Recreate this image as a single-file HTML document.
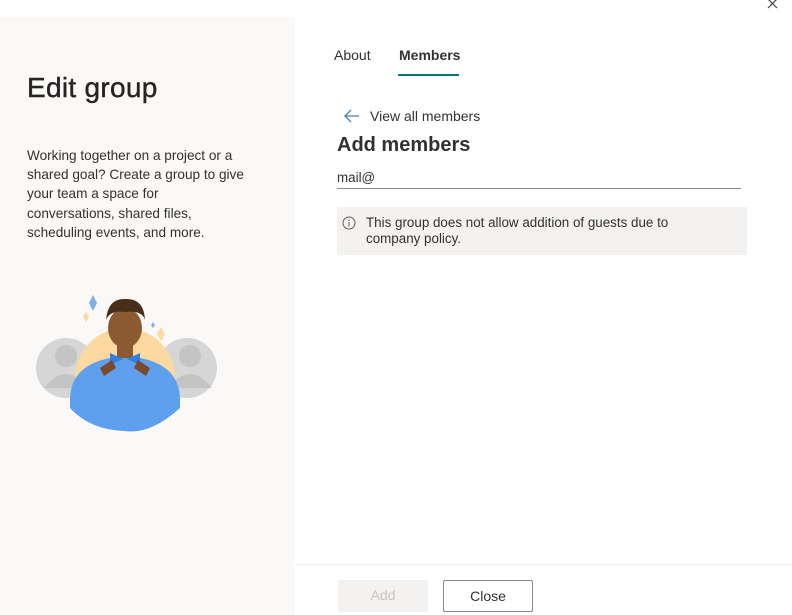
<!DOCTYPE html>
<html><head><meta charset="utf-8"><style>
*{margin:0;padding:0;box-sizing:border-box}
body{width:792px;height:615px;background:#fff;font-family:"Liberation Sans",sans-serif;color:#323130;position:relative;overflow:hidden}
.left{position:absolute;left:0;top:17px;width:295px;height:598px;background:#faf9f8}
.abs{position:absolute}
h1{position:absolute;left:27px;top:72px;font-size:28px;font-weight:normal;color:#252423;letter-spacing:0.3px;-webkit-text-stroke:0.4px #252423}
.desc{left:27px;top:146px;width:222px;font-size:13.6px;line-height:19.2px;color:#323130}
.tab{top:47px;font-size:14px}
.ul{left:398px;top:74px;width:61px;height:2px;background:#03787c}
.info{left:337px;top:207px;width:410px;height:48px;background:#f3f2f1}
.btn{top:580px;width:90px;height:32px;font-size:14px;text-align:center;line-height:30px;border-radius:2px}
</style></head><body>
<div class="left"></div>
<svg class="abs" style="left:766px;top:-3px" width="14" height="14" viewBox="0 0 14 14"><path d="M2 2L11 11M11 2L2 11" stroke="#444" stroke-width="1.2"/></svg>
<h1>Edit group</h1>
<div class="abs desc">Working together on a project or a shared goal? Create a group to give your team a space for conversations, shared files, scheduling events, and more.</div>
<svg class="abs" style="left:30px;top:290px" width="195" height="145" viewBox="0 0 195 145">
<circle cx="36" cy="78" r="30" fill="#d6d6d6"/>
<circle cx="36" cy="66" r="11" fill="#c4c4c4"/><path d="M14 98 Q36 70 58 98 Z" fill="#c4c4c4"/>
<circle cx="157" cy="78" r="30" fill="#d6d6d6"/>
<circle cx="160" cy="66" r="11" fill="#c4c4c4"/><path d="M138 98 Q160 70 182 98 Z" fill="#c4c4c4"/>
<circle cx="95" cy="88" r="50" fill="#fbd9a0"/>
<path d="M63 5 L67 13 L63 21 L59 13Z" fill="#7fb0ea"/>
<path d="M56 22 L59 27 L56 32 L53 27Z" fill="#fbd9a0"/>
<path d="M131 37 L135 44 L131 51 L127 44Z" fill="#fbd9a0"/>
<path d="M123 32 L125 35 L123 38 L121 35Z" fill="#7fb0ea"/>
<path d="M40 110 Q40 70 95 66 Q150 70 150 110 L150 118 Q120 145 95 141 Q60 140 40 118Z" fill="#5ea0ee"/>
<rect x="87" y="48" width="16" height="20" fill="#8b5a33"/>
<ellipse cx="95" cy="38" rx="17" ry="20" fill="#8b5a33"/>
<path d="M76 30 Q78 8 95 9 Q114 8 115 30 Q112 20 95 22 Q80 20 76 30Z" fill="#4a2e1c"/>
<path d="M80 63 L93 69 L80 75Z M110 63 L97 69 L110 75Z" fill="#2f7fe0"/>
<path d="M70 78 L82 70 L86 78 L74 86Z M120 78 L108 70 L104 78 L116 86Z" fill="#7a4a2a"/>
</svg>
<div class="abs tab" style="left:334px">About</div>
<div class="abs tab" style="left:399px;font-weight:bold">Members</div>
<div class="abs ul"></div>
<svg class="abs" style="left:343px;top:108px" width="18" height="16" viewBox="0 0 18 16"><path d="M16 8H2M8 2L2 8L8 14" fill="none" stroke="#4a7fb5" stroke-width="1.3"/></svg>
<div class="abs" style="left:370px;top:108px;font-size:14px">View all members</div>
<div class="abs" style="left:337px;top:134px;font-size:20px;font-weight:bold">Add members</div>
<div class="abs" style="left:337px;top:170px;font-size:13.4px">mail@</div>
<div class="abs" style="left:337px;top:188px;width:404px;height:1px;background:#8a8886"></div>
<div class="abs info"></div>
<svg class="abs" style="left:342px;top:216px" width="14" height="14" viewBox="0 0 14 14"><circle cx="7" cy="7" r="6" fill="none" stroke="#605e5c"/><path d="M7 6V10.5" stroke="#605e5c"/><circle cx="7" cy="4.2" r="0.7" fill="#605e5c"/></svg>
<div class="abs" style="left:366px;top:215px;width:360px;font-size:13.4px;line-height:16px">This group does not allow addition of guests due to company policy.</div>
<div class="abs" style="left:295px;top:564px;width:497px;height:1px;background:#edebe9"></div>
<div class="abs btn" style="left:338px;background:#f3f2f1;color:#c8c6c4">Add</div>
<div class="abs btn" style="left:443px;border:1px solid #8a8886;color:#323130">Close</div>
</body></html>
